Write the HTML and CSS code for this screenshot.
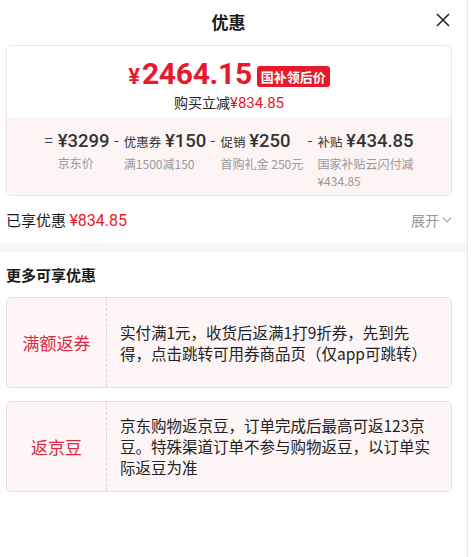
FILE: index.html
```html
<!DOCTYPE html>
<html lang="zh-CN">
<head>
<meta charset="utf-8">
<link rel="stylesheet" href="styles.css">
</head>
<body>
<div class="panel">
  <header class="head">
    <h1 class="title">优惠</h1>
    <button class="close" aria-label="关闭">
      <svg width="14" height="14" viewBox="0 0 14 14"><path d="M1 1L13 13M13 1L1 13" stroke="#222" stroke-width="1.5" fill="none"/></svg>
    </button>
  </header>

  <section class="summary">
    <div class="summary-top">
      <div class="price-line">
        <span class="yen">¥</span><span class="price">2464.15</span><span class="tag">国补领后价</span>
      </div>
      <div class="save">购买立减<span class="red">¥834.85</span></div>
    </div>
    <div class="breakdown">
      <div class="col">
        <span class="op">=</span>
        <div class="stack">
          <div class="val"><b>¥3299</b></div>
          <div class="lab">京东价</div>
        </div>
      </div>
      <div class="col">
        <span class="op">-</span>
        <div class="stack">
          <div class="val"><small>优惠券</small> <b>¥150</b></div>
          <div class="lab">满1500减150</div>
        </div>
      </div>
      <div class="col">
        <span class="op">-</span>
        <div class="stack">
          <div class="val"><small>促销</small> <b>¥250</b></div>
          <div class="lab">首购礼金 250元</div>
        </div>
      </div>
      <div class="col">
        <span class="op">-</span>
        <div class="stack">
          <div class="val"><small>补贴</small> <b>¥434.85</b></div>
          <div class="lab">国家补贴云闪付减</div>
          <div class="lab">¥434.85</div>
        </div>
      </div>
    </div>
  </section>

  <div class="enjoyed">
    <span>已享优惠 <span class="red">¥834.85</span></span>
    <span class="expand">展开
      <svg width="10" height="6" viewBox="0 0 10 6"><path d="M1 0.8L5 4.8L9 0.8" stroke="#999" stroke-width="1.1" fill="none"/></svg>
    </span>
  </div>

  <div class="band"></div>

  <h2 class="more">更多可享优惠</h2>

  <div class="offer">
    <div class="offer-name">满额返券</div>
    <div class="offer-desc">实付满1元，收货后返满1打9折券，先到先得，点击跳转可用券商品页（仅app可跳转）</div>
  </div>
  <div class="offer">
    <div class="offer-name">返京豆</div>
    <div class="offer-desc">京东购物返京豆，订单完成后最高可返123京豆。特殊渠道订单不参与购物返豆，以订单实际返豆为准</div>
  </div>
</div>
</body>
</html>
```
FILE: styles.css
```css
* { box-sizing: border-box; }
html, body { margin: 0; padding: 0; background: #fff; }
body {
  font-family: "Noto Sans CJK SC", "Noto Sans", sans-serif;
  color: #1a1a1a;
  width: 473px;
  height: 557px;
  overflow: hidden;
}
.panel {
  width: 468px;
  height: 557px;
  border-right: 1px solid #e6e6e6;
}
.head {
  position: relative;
  height: 42px;
  display: flex;
  align-items: center;
  justify-content: center;
}
.title {
  margin: 0;
  font-size: 17px;
  font-weight: 700;
  color: #1a1a1a;
  margin-left: -10px;
}
.close {
  position: absolute;
  right: 17px;
  top: 13px;
  border: 0;
  background: none;
  padding: 0;
  width: 14px;
  height: 14px;
  display: flex;
}
.summary {
  margin: 3px 15px 0 6px;
  border: 1px solid #f1e3e5;
  border-radius: 5px;
  overflow: hidden;
}
.summary-top {
  height: 71px;
  display: flex;
  flex-direction: column;
  align-items: center;
  padding-top: 13px;
}
.price-line {
  display: flex;
  align-items: baseline;
  color: #e8192c;
  line-height: 30px;
}
.yen { font-family: "Roboto", sans-serif; font-weight: 700; font-size: 22px; margin-right: 2px; }
.price { font-family: "Roboto", sans-serif; font-weight: 700; font-size: 30px; letter-spacing: -0.3px; }
.tag {
  align-self: center;
  margin-left: 5px;
  background: #e8192c;
  color: #fff;
  font-size: 13px;
  font-weight: 700;
  padding: 0 4px;
  height: 21px;
  line-height: 21px;
  border-radius: 3px;
  position: relative;
  top: 1px;
}
.save {
  font-size: 14px;
  line-height: 20px;
  color: #222;
}
.red { color: #e8192c; font-family: "Roboto", "Noto Sans CJK SC", sans-serif; }
.save .red { font-size: 15px; }
.breakdown {
  background: #fdf4f5;
  height: 78px;
  display: flex;
  justify-content: center;
  gap: 4px;
  padding-top: 10px;
}
.col { display: flex; align-items: flex-start; }
.op {
  font-size: 15px;
  color: #444;
  line-height: 26px;
  margin-right: 5px;
}
.val { line-height: 26px; color: #333; white-space: nowrap; }
.val small { font-size: 12.5px; color: #333; }
.val b { font-family: "Roboto", sans-serif; font-weight: 500; font-size: 18.5px; color: #333; }
.lab {
  font-size: 12px;
  color: #999;
  line-height: 17px;
  white-space: nowrap;
}
.enjoyed {
  margin: 0 15px 0 6px;
  height: 47px;
  display: flex;
  align-items: center;
  justify-content: space-between;
  font-size: 15px;
  color: #1a1a1a;
}
.enjoyed .red { font-size: 16px; }
.expand {
  color: #999;
  font-size: 14px;
  display: flex;
  align-items: center;
  gap: 3px;
}
.band {
  height: 9px;
  background: #f5f6fa;
}
.more {
  margin: 0;
  padding: 0 6px;
  height: 45px;
  line-height: 45px;
  font-size: 15px;
  font-weight: 700;
  color: #1a1a1a;
}
.offer {
  margin: 0 15px 13px 6px;
  min-height: 91px;
  background: #fdf5f6;
  border: 1px solid #f1dadd;
  border-radius: 5px;
  display: flex;
}
.offer-name {
  width: 100px;
  flex: none;
  display: flex;
  align-items: center;
  justify-content: center;
  color: #dc2a40;
  font-size: 17px;
  border-right: 1px dashed #e3cfd2;
}
.offer-desc {
  flex: 1;
  padding: 12px 14px 12px 13px;
  display: flex;
  align-items: center;
  font-size: 15.5px;
  line-height: 21px;
  color: #222;
}
```
